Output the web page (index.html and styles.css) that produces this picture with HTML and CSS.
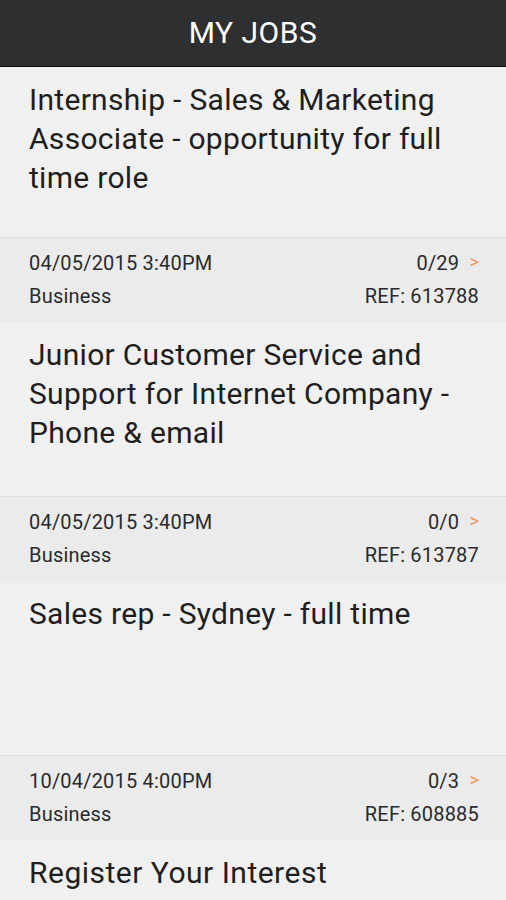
FILE: index.html
```html
<!DOCTYPE html>
<html>
<head>
  <title>My Jobs</title>
  <link rel="stylesheet" href="styles.css">
</head>
<body>
  <header class="topbar">MY JOBS</header>

  <ul class="jobs">
    <li class="job">
      <div class="job-title first">Internship - Sales &amp; Marketing Associate - opportunity for full time role</div>
      <div class="job-meta">
        <div class="meta-row"><span>04/05/2015 3:40PM</span><span>0/29 <b class="arrow">&gt;</b></span></div>
        <div class="meta-row"><span>Business</span><span>REF: 613788</span></div>
      </div>
    </li>
    <li class="job">
      <div class="job-title">Junior Customer Service and Support for Internet Company - Phone &amp; email</div>
      <div class="job-meta">
        <div class="meta-row"><span>04/05/2015 3:40PM</span><span>0/0 <b class="arrow">&gt;</b></span></div>
        <div class="meta-row"><span>Business</span><span>REF: 613787</span></div>
      </div>
    </li>
    <li class="job">
      <div class="job-title">Sales rep - Sydney - full time</div>
      <div class="job-meta">
        <div class="meta-row"><span>10/04/2015 4:00PM</span><span>0/3 <b class="arrow">&gt;</b></span></div>
        <div class="meta-row"><span>Business</span><span>REF: 608885</span></div>
      </div>
    </li>
    <li class="job">
      <div class="job-title">Register Your Interest</div>
    </li>
  </ul>
</body>
</html>
```

FILE: styles.css
```css
body {
  margin: 0;
  font-family: Roboto, "Liberation Sans", Arial, sans-serif;
  background-color: #f0f0f0;
  color: #222;
  overflow: hidden;
}

.topbar {
  height: 66px;
  line-height: 66px;
  background-color: #2e2f31;
  border-bottom: 1px solid #0c0c0c;
  color: #fff;
  text-align: center;
  font-size: 30px;
  letter-spacing: 0.5px;
}

.jobs {
  list-style: none;
  margin: 0;
  padding: 0;
}

.job-title {
  height: 161px;
  padding: 13px 20px 0 29px;
  font-size: 30px;
  line-height: 39px;
  letter-spacing: 0.3px;
  color: #1e1e1e;
}

.job-title.first {
  height: 157px;
}

.job-title:last-child {
  letter-spacing: 0.5px;
}

.job-meta {
  height: 75px;
  padding: 9px 27px 0 29px;
  background-color: #ebebeb;
  border-top: 1px solid #e0e0e0;
  font-size: 20px;
  line-height: 32px;
  letter-spacing: 0.2px;
  color: #2a2a2a;
}

.meta-row {
  display: flex;
  justify-content: space-between;
}

.arrow {
  font-weight: normal;
  font-size: 18px;
  color: #f0925a;
  margin-left: 5px;
  position: relative;
  top: -2px;
}
```
